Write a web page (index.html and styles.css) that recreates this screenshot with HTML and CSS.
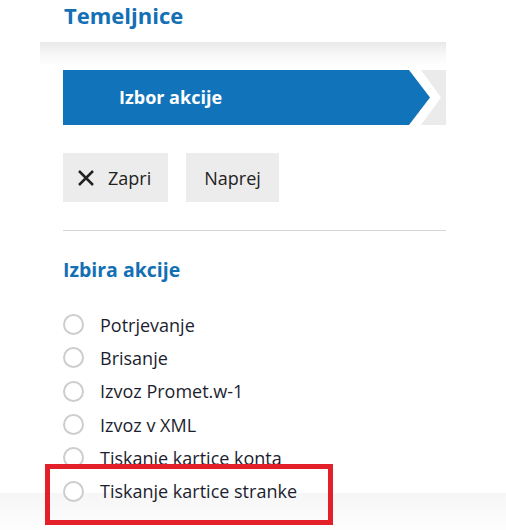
FILE: index.html
```html
<!DOCTYPE html>
<html lang="sl">
<head>
<meta charset="utf-8">
<title>Temeljnice</title>
<link rel="stylesheet" href="styles.css">
</head>
<body>
<div class="page">
  <h1 class="title">Temeljnice</h1>
  <div class="shadow-band"></div>
  <div class="steps">
    <div class="step step-active">Izbor akcije</div>
    <div class="step step-next"></div>
  </div>
  <div class="actions">
    <button class="btn"><svg class="icon-x" width="18" height="18" viewBox="0 0 18 18"><path d="M2 2 L16 16 M16 2 L2 16" stroke="#222" stroke-width="2.5" fill="none"/></svg>Zapri</button>
    <button class="btn">Naprej</button>
  </div>
  <div class="divider"></div>
  <h2 class="section-title">Izbira akcije</h2>
  <ul class="radio-list">
    <li class="radio-item"><span class="radio"></span>Potrjevanje</li>
    <li class="radio-item"><span class="radio"></span>Brisanje</li>
    <li class="radio-item"><span class="radio"></span>Izvoz Promet.w-1</li>
    <li class="radio-item"><span class="radio"></span>Izvoz v XML</li>
    <li class="radio-item"><span class="radio"></span>Tiskanje kartice konta</li>
    <li class="radio-item"><span class="radio"></span>Tiskanje kartice stranke</li>
  </ul>
</div>
<div class="highlight"></div>
</body>
</html>
```

FILE: styles.css
```css
html {
  min-height: 100%;
  background: linear-gradient(to bottom, #ffffff 0, #ffffff 493px, #f6f6f6 493px, #fdfdfd 530px);
}
body {
  margin: 0;
  font-family: "Open Sans", "Liberation Sans", sans-serif;
  color: #222;
}
.page {
  margin-left: 40px;
  width: 406px;
}
.title {
  margin: 0;
  padding-left: 24px;
  font-size: 22px;
  font-weight: 700;
  line-height: 30px;
  color: #1370b5;
}
.shadow-band {
  margin-top: 12px;
  height: 24px;
  background: linear-gradient(to bottom, #e8e8e8 0, #f6f6f6 45%, #ffffff 100%);
}
.steps {
  margin-top: 4px;
  margin-left: 23px;
  display: flex;
  height: 55px;
}
.step {
  height: 55px;
}
.step-active {
  width: 367px;
  flex: none;
  background: #1174ba;
  color: #fff;
  font-size: 18px;
  font-weight: 700;
  line-height: 55px;
  padding-left: 56px;
  box-sizing: border-box;
  clip-path: polygon(0 0, calc(100% - 21px) 0, 100% 50%, calc(100% - 21px) 100%, 0 100%);
}
.step-next {
  flex: none;
  width: 25px;
  margin-left: -9px;
  background: #ebebeb;
  clip-path: polygon(0 0, 100% 0, 100% 100%, 0 100%, 20px 50%);
}
.actions {
  margin-top: 28px;
  margin-left: 23px;
  display: flex;
  gap: 18px;
}
.btn {
  display: flex;
  align-items: center;
  height: 49px;
  padding: 0 17px;
  border: 0;
  background: #ececec;
  font-family: inherit;
  font-size: 18px;
  color: #222;
}
.btn:last-child {
  padding: 0 18px;
}
.icon-x {
  margin-left: -3px;
  margin-right: 13px;
}
.divider {
  margin-top: 28px;
  margin-left: 23px;
  height: 1px;
  background: #d6d6d6;
}
.section-title {
  margin: 25px 0 0 23px;
  font-size: 19.5px;
  font-weight: 700;
  line-height: 27px;
  color: #1370b5;
}
.radio-list {
  list-style: none;
  margin: 25px 0 0 23px;
  padding: 0;
}
.radio-item {
  display: flex;
  align-items: center;
  height: 33.33px;
  font-size: 18px;
  color: #1c1e30;
}
.radio {
  width: 21px;
  height: 21px;
  box-sizing: border-box;
  border: 2px solid #cdcdcd;
  border-radius: 50%;
  margin-right: 16px;
  background: #fff;
}
.highlight {
  position: absolute;
  left: 45px;
  top: 464px;
  width: 288px;
  height: 61px;
  box-sizing: border-box;
  border: 5px solid #e3202a;
}
```
